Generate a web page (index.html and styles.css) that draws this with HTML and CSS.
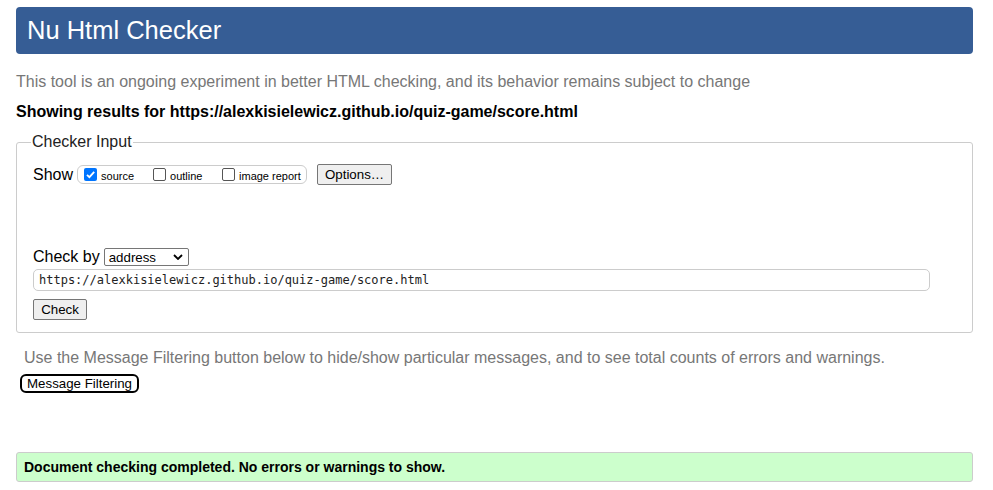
FILE: index.html
```html
<!DOCTYPE html>
<html>
<head>
<meta charset="utf-8">
<title>Nu Html Checker</title>
<link rel="stylesheet" href="styles.css">
</head>
<body>
<h1 class="title">Nu Html Checker</h1>
<p class="intro">This tool is an ongoing experiment in better HTML checking, and its behavior remains subject to change</p>
<p class="results">Showing results for https://alexkisielewicz.github.io/quiz-game/score.html</p>
<fieldset class="checker">
  <legend class="legend">Checker Input</legend>
  <div class="show-row">
    <span class="show-label">Show</span>
    <span class="show-group">
      <label class="opt"><span class="cb checked"><svg viewBox="0 0 13 13" width="13" height="13"><rect x="0" y="0" width="13" height="13" rx="2" fill="#0075ff"/><path d="M3 6.8 L5.4 9.2 L10.2 3.8" fill="none" stroke="#fff" stroke-width="1.8"/></svg></span>source</label>
      <label class="opt"><span class="cb"></span>outline</label>
      <label class="opt"><span class="cb"></span>image report</label>
    </span>
    <button class="btn options">Options…</button>
  </div>
  <div class="checkby-row">
    <span class="checkby-label">Check by</span>
    <span class="select">address<svg class="chev" viewBox="0 0 10 6" width="10" height="6"><path d="M1 1 L5 5 L9 1" fill="none" stroke="#000" stroke-width="1.8"/></svg></span>
  </div>
  <div class="url">https://alexkisielewicz.github.io/quiz-game/score.html</div>
  <button class="btn check">Check</button>
</fieldset>
<p class="filter-note">Use the Message Filtering button below to hide/show particular messages, and to see total counts of errors and warnings.</p>
<button class="filter-btn">Message Filtering</button>
<div class="success">Document checking completed. No errors or warnings to show.</div>
</body>
</html>
```
FILE: styles.css
```css
html, body { margin: 0; padding: 0; background: #fff; }
body {
  font-family: "Liberation Sans", Arial, sans-serif;
  font-size: 16px;
  color: #000;
  padding: 7px 20px 0 16px;
}
.title {
  margin: 0;
  background: #365d95;
  color: #fff;
  font-weight: normal;
  font-size: 25.5px;
  height: 47px;
  line-height: 46px;
  padding: 0 11px;
  border-radius: 4px;
}
.intro {
  margin: 19px 0 0;
  color: #777;
  line-height: 18px;
}
.results {
  margin: 12px 0 0;
  font-weight: bold;
  line-height: 18px;
}
.checker {
  margin: 12px 0 0;
  border: 1px solid #ccc;
  border-radius: 3px;
  padding: 0 16px 12px;
  height: 200px;
  box-sizing: border-box;
}
.legend {
  padding: 0 1px;
  margin-left: -2px;
  color: #222;
  line-height: 18px;
}
.show-row {
  display: flex;
  align-items: center;
  margin-top: 13px;
  height: 21px;
}
.show-label { margin-right: 4px; }
.show-group {
  display: inline-flex;
  align-items: center;
  border: 1px solid #ccc;
  border-radius: 6px;
  height: 17px;
  padding: 0 6px 0 6px;
  width: 216px;
  box-sizing: content-box;
  white-space: nowrap;
}
.opt {
  display: inline-flex;
  align-items: center;
  font-size: 11px;
  color: #000;
  white-space: nowrap;
  flex: none;
  padding-top: 2px;
}
.opt:nth-child(1) { width: 69px; }
.opt:nth-child(2) { width: 69px; }
.cb {
  display: inline-block;
  width: 11px;
  height: 11px;
  border: 1px solid #555;
  border-radius: 2px;
  margin-right: 4px;
  margin-top: -3px;
  box-sizing: content-box;
  flex: none;
}
.cb.checked { border: none; width: 13px; height: 13px; }
.cb svg { display: block; }
.btn {
  font-family: "Liberation Sans", Arial, sans-serif;
  font-size: 13.3px;
  color: #000;
  background: #efefef;
  border: 1px solid #767676;
  border-radius: 2px;
  padding: 0 6px;
  height: 21px;
  line-height: 19px;
}
.options { margin-left: 10px; width: 75px; padding: 0; }
.checkby-row {
  display: flex;
  align-items: center;
  margin-top: 63px;
  height: 18px;
}
.checkby-label { margin-right: 4px; }
.select {
  display: inline-flex;
  align-items: center;
  justify-content: space-between;
  width: 85px;
  height: 18px;
  box-sizing: border-box;
  border: 1px solid #767676;
  border-radius: 2px;
  padding: 0 5px 0 4px;
  font-size: 13.3px;
}
.chev { display: block; }
.url {
  margin-top: 3px;
  width: 897px;
  height: 22px;
  box-sizing: border-box;
  border: 1px solid #ccc;
  border-radius: 5px;
  padding: 0 5px;
  font-family: "DejaVu Sans Mono", "Liberation Mono", monospace;
  font-size: 12px;
  line-height: 20px;
  color: #222;
}
.check {
  margin-top: 8px;
  width: 54px;
  padding: 0;
  font-size: 13.3px;
}
.filter-note {
  margin: 16px 0 0 8px;
  color: #777;
  line-height: 18px;
}
.filter-btn {
  margin: 7px 0 0 4px;
  font-family: "Liberation Sans", Arial, sans-serif;
  font-size: 13.3px;
  background: #fff;
  color: #000;
  border: 2px solid #000;
  border-radius: 6px;
  padding: 0 4px;
  width: 119px;
  height: 19px;
  line-height: 14px;
}
.success {
  margin-top: 59px;
  background: #ccffcc;
  border: 1px solid #ccc;
  border-radius: 3px;
  height: 30px;
  box-sizing: border-box;
  padding: 0 7px;
  font-weight: bold;
  font-size: 14px;
  line-height: 28px;
}
```
